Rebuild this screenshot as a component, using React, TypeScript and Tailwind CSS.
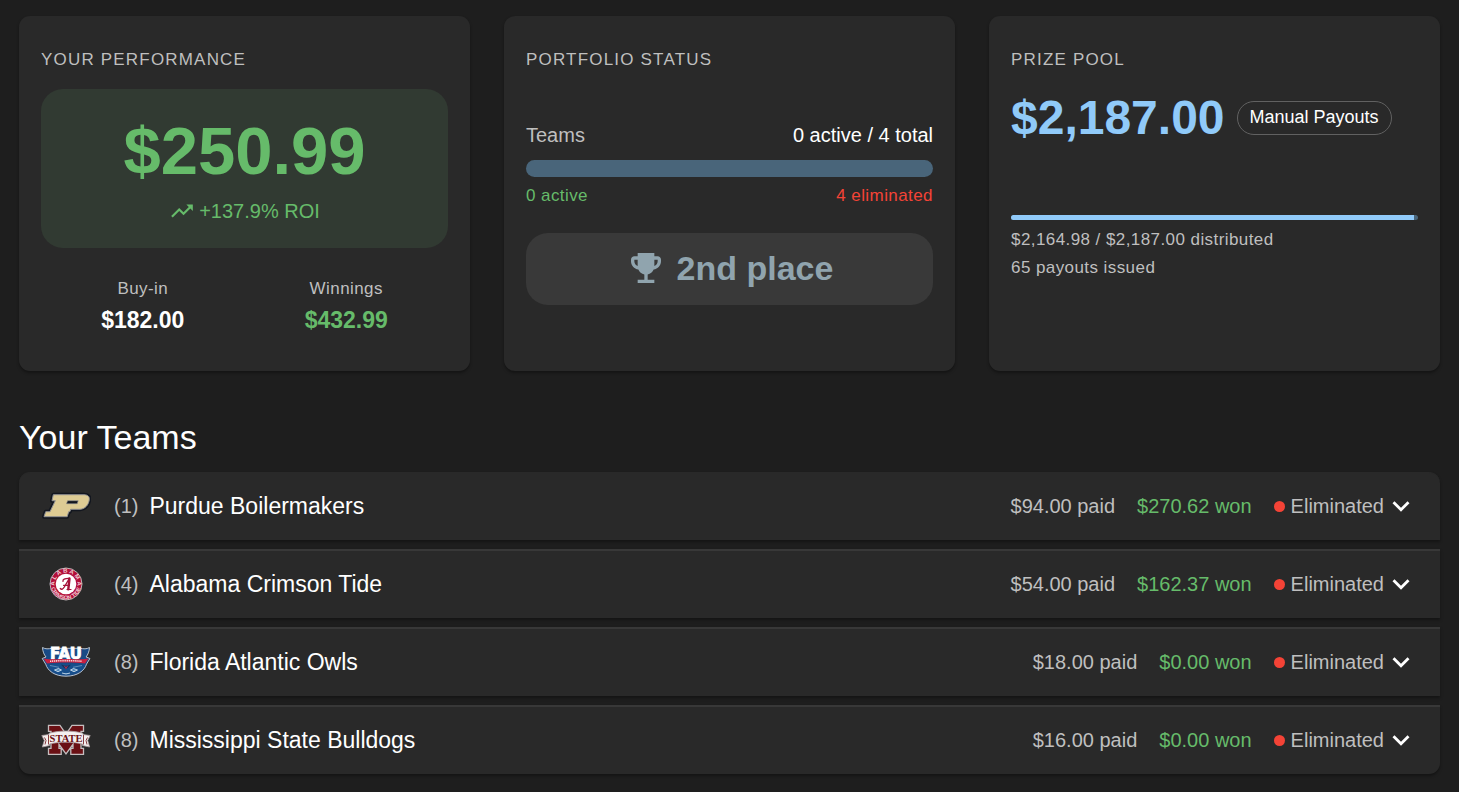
import clsx from "clsx";
import type { ReactNode } from "react";

type Team = {
  seed: number;
  name: string;
  paid: string;
  won: string;
  logo: ReactNode;
};

function PurdueLogo() {
  const shape =
    "M12.3 13.7H43c3.6 0 5.8 1.8 5.3 5-.7 5-4 9.3-9.3 9.6h-9.3l-.8 2.4h-1.2l-1.5 5H3l1.7-5H9l5.3-11H11z";

  return (
    <svg viewBox="0 0 50 50" className="size-[50px]" aria-hidden="true">
      <path d={shape} fill="#12161f" stroke="#12161f" strokeWidth="4" strokeLinejoin="round" />
      <path d={shape} fill="#ddcb94" stroke="#8f8f92" strokeWidth="1" />
      <path d="M26.6 19.7h10.6l-1 3H25.5z" fill="#12161f" stroke="#8f8f92" strokeWidth=".6" />
    </svg>
  );
}

function AlabamaLogo() {
  return (
    <svg viewBox="0 0 50 50" className="size-[50px]" aria-hidden="true">
      <circle cx="25" cy="25" r="16" fill="#b30f3a" stroke="#bdb5b7" strokeWidth="1" />
      <circle cx="25" cy="25" r="10.3" fill="#fff" />
      <path id="ua-top" d="M13.6 25a11.4 11.4 0 0 1 22.8 0" fill="none" />
      <path id="ua-bottom" d="M9.6 25a15.4 15.4 0 0 0 30.8 0" fill="none" />
      <g fill="#f0ccd5" fontFamily="Liberation Sans, sans-serif" fontWeight="700" textAnchor="middle">
        <text fontSize="6">
          <textPath href="#ua-top" startOffset="50%">A L A B A M A</textPath>
        </text>
        <text fontSize="5.5">
          <textPath href="#ua-bottom" startOffset="50%">CRIMSON TIDE</textPath>
        </text>
      </g>
      <g fill="none" stroke="#a5123a" strokeLinecap="round" strokeLinejoin="round">
        <path d="M19.3 29.5c1.2 1.5 2.7.6 4-1.5l5-8.5" strokeWidth="1.4" />
        <path d="M28.5 19.5 27.3 30.3" strokeWidth="2.4" />
        <path d="M22 22.5c-.6-2 1.8-3.3 6-3.2M22.5 26.3h6M26 30.5h4" strokeWidth="1.2" />
      </g>
    </svg>
  );
}

function OwlsLogo() {
  return (
    <svg viewBox="0 0 50 50" className="size-[50px]" aria-hidden="true">
      <path
        d="M1.5 10.5c3 1.8 6 1.5 9 .8h29c3 .7 6 1 9-.8-.2 4-1.600 7-3.400 9.500l3.800 1.500-3.400 5.700c-2 6.500-9 12-20.500 12S6.700 33.700 4.700 27.200L1.200 21.500 5 20c-2-2.500-3.300-5.500-3.500-9.500z"
        fill="#194a85"
        stroke="#b9c3ce"
        strokeWidth="1"
      />
      <text
        x="25"
        y="22.3"
        fill="#fff"
        fontFamily="DejaVu Sans, sans-serif"
        fontSize="15"
        fontWeight="700"
        textAnchor="middle"
        stroke="#fff"
        strokeWidth=".8"
      >
        FAU
      </text>
      <path d="M2.500 21.500c5 1.200 11 .4 22.500.4s17.500.8 22.500-.4l-3.500 5c-12-1.400-26-1.400-38 0z" fill="#c9203f" />
      <path d="M9 24.300c11-.9 21-.9 32 0" fill="none" stroke="#f3d7dc" strokeWidth="1.600" strokeDasharray="1.200 .7" />
      <path d="M7 28.500c10-2.300 26-2.300 36 0-2 5-8 9.300-18 9.300S9 33.500 7 28.500z" fill="#174f8c" />
      <path d="m20 27.500 2.500 3 2.500 1.500 2.500-1.500 2.500-3-5 1.200z" fill="#12335f" />
      <path d="m22.500 28 2.500 2 2.500-2-2.500 4.500z" fill="#a83055" />
      <path
        d="m13.500 33 4-1.500 3 1.500-3.500 1.700zM29.500 33l3-1.500 4 1.500-3.500 1.700zM21 36l4 1 4-1"
        fill="#4a86ba"
        stroke="#dce8f2"
        strokeWidth=".8"
      />
      <path d="m9 28.500 9 1.800M41 28.500l-9 1.800" stroke="#6d9ac3" strokeWidth=".8" />
    </svg>
  );
}

function BulldogsLogo() {
  return (
    <svg viewBox="0 0 50 50" className="size-[50px]" aria-hidden="true">
      <path
        d="M7.500 10.300h11.500L25 19l6-8.700h11.500v6H40v17h2.500v6H29.800v-6H32v-4l-7 9.500-7-9.500v4h2.200v6H7.500v-6H10v-17H7.500z"
        fill="#6a1014"
        stroke="#c4bdbe"
        strokeWidth="1.300"
      />
      <path
        d="M.8 20.500 8 19.500v-1.200c10-3 24-3 34 0v1.200l7.200 1-2.500 5 2 6.500-7.200-1.500v-1.500c-10-2.500-23-2.500-33 0v1.500L1.300 32l2-6.500z"
        fill="#f4efef"
        stroke="#a99b9d"
        strokeWidth=".8"
      />
      <path
        d="M7.500 20v9.500M42.500 20v9.500M3.500 22.500l1.500 3-1 4M46.500 22.500l-1.500 3 1 4"
        fill="none"
        stroke="#6a1014"
        strokeWidth=".8"
      />
      <text
        x="25"
        y="27.300"
        fill="#6a1014"
        fontFamily="Liberation Serif, serif"
        fontSize="10.500"
        fontWeight="700"
        textAnchor="middle"
      >
        STATE
      </text>
    </svg>
  );
}

const teams: Team[] = [
  { seed: 1, name: "Purdue Boilermakers", paid: "$94.00", won: "$270.62", logo: <PurdueLogo /> },
  { seed: 4, name: "Alabama Crimson Tide", paid: "$54.00", won: "$162.37", logo: <AlabamaLogo /> },
  { seed: 8, name: "Florida Atlantic Owls", paid: "$18.00", won: "$0.00", logo: <OwlsLogo /> },
  { seed: 8, name: "Mississippi State Bulldogs", paid: "$16.00", won: "$0.00", logo: <BulldogsLogo /> },
];

function Icon({ d, className }: { d: string; className?: string }) {
  return (
    <svg viewBox="0 0 24 24" fill="currentColor" className={clsx("shrink-0", className)} aria-hidden="true">
      <path d={d} />
    </svg>
  );
}

const TRENDING_UP = "m16 6 2.29 2.29-4.88 4.88-4-4L2 16.59 3.41 18l6-6 4 4 6.3-6.29L22 12V6z";
const TROPHY =
  "M19 5h-2V3H7v2H5c-1.1 0-2 .9-2 2v1c0 2.55 1.92 4.63 4.39 4.94.63 1.5 1.98 2.63 3.61 2.96V19H7v2h10v-2h-4v-3.1c1.63-.33 2.98-1.46 3.61-2.96C19.08 12.63 21 10.55 21 8V7c0-1.1-.9-2-2-2M5 8V7h2v3.82C5.84 10.4 5 9.3 5 8m14 0c0 1.3-.84 2.4-2 2.82V7h2z";
const EXPAND_MORE = "M16.59 8.59 12 13.17 7.41 8.59 6 10l6 6 6-6z";

function Card({ title, children }: { title: string; children: ReactNode }) {
  return (
    <section className="rounded-[11px] bg-[#292929] px-[22px] pt-[22px] pb-[34px] shadow-[0_2px_3px_rgba(0,0,0,0.35)]">
      <h2 className="pb-0.5 text-[17px] leading-[43px] tracking-[0.07em] text-[#bfbfbf] uppercase">{title}</h2>
      {children}
    </section>
  );
}

function Stat({ label, value, className }: { label: string; value: string; className?: string }) {
  return (
    <div className="text-center">
      <dt className="text-[17px] leading-7 tracking-wide text-[#bfbfbf]">{label}</dt>
      <dd className={clsx("text-[23px] leading-[34px] font-bold", className)}>{value}</dd>
    </div>
  );
}

function Progress({ label, value, className }: { label: string; value: number; className?: string }) {
  return (
    <div
      role="progressbar"
      aria-label={label}
      aria-valuenow={value}
      className={clsx("overflow-hidden rounded-full bg-[#49657a]", className)}
    >
      <div className="h-full bg-[#90caf9]" style={{ width: `${value}%` }} />
    </div>
  );
}

function TeamRow({ team }: { team: Team }) {
  return (
    <li className="border-t-2 border-[#383838] bg-[#292929] shadow-[0_2px_3px_rgba(0,0,0,0.35)] first:rounded-t-[11px] first:border-t first:border-[#292929] last:rounded-b-[11px]">
      <button type="button" aria-expanded="false" className="flex h-[67px] w-full items-center px-[22px] pb-px text-xl text-[#bfbfbf]">
        {team.logo}
        <span className="ml-[23px]">({team.seed})</span>
        <span className="ml-[11px] text-[23px] text-white">{team.name}</span>
        <span className="ml-auto">{team.paid} paid</span>
        <span className="ml-[22px] text-[#66bb6a]">{team.won} won</span>
        <span className="ml-[22px] size-[11px] rounded-full bg-[#f44336]" />
        <span className="ml-[6px]">Eliminated</span>
        <Icon d={EXPAND_MORE} className="size-[34px] text-white" />
      </button>
    </li>
  );
}

export default function App() {
  return (
    <main className="min-h-screen bg-[#1e1e1e] px-[19px] py-4 font-['Liberation_Sans',Arial,sans-serif] text-white">
      <div className="grid grid-cols-3 gap-[34px]">
        <Card title="Your Performance">
          <div className="mt-[6px] rounded-[22px] bg-[#313a32] py-[22px] text-center text-[#66bb6a]">
            <p className="text-[67px] leading-[79px] font-bold">$250.99</p>
            <p className="mt-[7px] flex items-center justify-center gap-1 pb-px text-xl leading-7">
              <Icon d={TRENDING_UP} className="size-[26px]" />
              +137.9% ROI
            </p>
          </div>
          <dl className="mt-[27px] grid grid-cols-2">
            <Stat label="Buy-in" value="$182.00" />
            <Stat label="Winnings" value="$432.99" className="text-[#66bb6a]" />
          </dl>
        </Card>

        <Card title="Portfolio Status">
          <div className="mt-[38px] flex justify-between text-xl leading-7">
            <span className="text-[#bfbfbf]">Teams</span>
            <span>0 active / 4 total</span>
          </div>
          <Progress label="Active teams" value={0} className="mt-[11px] h-[17px]" />
          <div className="mt-[5px] flex justify-between text-[17px] leading-7 tracking-wide">
            <span className="text-[#66bb6a]">0 active</span>
            <span className="text-[#f44336]">4 eliminated</span>
          </div>
          <div className="mt-[23px] flex h-[72px] items-center justify-center gap-[11px] rounded-[22px] bg-[#393939] pb-0.5 text-[34px] font-bold text-[#90a4ae]">
            <Icon d={TROPHY} className="size-10" />
            2nd place
          </div>
        </Card>

        <Card title="Prize Pool">
          <div className="mt-[5px] flex items-center gap-3">
            <span className="text-5xl leading-[60px] font-bold text-[#90caf9]">$2,187.00</span>
            <span className="flex h-[34px] items-center rounded-full border border-[#616161] px-3 pb-0.5 text-lg whitespace-nowrap">
              Manual Payouts
            </span>
          </div>
          <Progress label="Prize pool distributed" value={99} className="mt-[67px] h-[5px]" />
          <div className="mt-[6px] text-[17px] leading-7 tracking-wide text-[#bfbfbf]">
            <p>$2,164.98 / $2,187.00 distributed</p>
            <p>65 payouts issued</p>
          </div>
        </Card>
      </div>

      <h1 className="mt-[45px] text-[34px] leading-[42px]">Your Teams</h1>
      <ul className="mt-[14px] flex flex-col gap-[9px]">
        {teams.map((team) => (
          <TeamRow key={team.name} team={team} />
        ))}
      </ul>
    </main>
  );
}
